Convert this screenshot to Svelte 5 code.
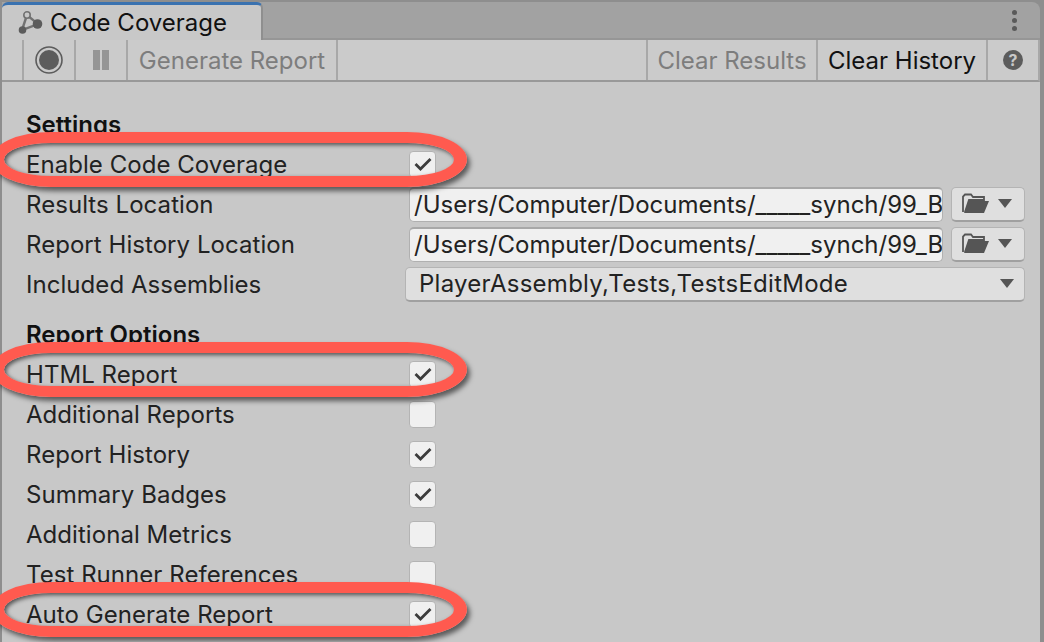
<script>
	const generalRows = [
		{ label: 'Results Location', path: '/Users/Computer/Documents/_____synch/99_B' },
		{ label: 'Report History Location', path: '/Users/Computer/Documents/_____synch/99_B' }
	];
	const reportRows = [
		{ label: 'HTML Report', checked: true },
		{ label: 'Additional Reports', checked: false },
		{ label: 'Report History', checked: true },
		{ label: 'Summary Badges', checked: true },
		{ label: 'Additional Metrics', checked: false },
		{ label: 'Test Runner References', checked: false },
		{ label: 'Auto Generate Report', checked: true }
	];
</script>

{#snippet checkbox(checked)}
	<span class="check">
		{#if checked}
			<svg width="18" height="14" viewBox="0 0 18 14"><path d="M1.500 7 6.500 12 16.500 2" fill="none" stroke="#3c3c3c" stroke-width="2.800" /></svg>
		{/if}
	</span>
{/snippet}

<div class="window">
	<div class="tabbar">
		<div class="tab">
			<svg class="tab-icon" width="26" height="26" viewBox="0 0 26 26">
				<path d="M9 5 4 20 20 14Z" fill="none" stroke="#727272" stroke-width="2.400" />
				<circle cx="9" cy="5" r="3.200" fill="#c8c8c8" stroke="#727272" stroke-width="1.600" />
				<circle cx="4.500" cy="20" r="3.800" fill="#5c5c5c" />
				<circle cx="19.500" cy="14" r="4.800" fill="#5c5c5c" />
			</svg>
			<span>Code Coverage</span>
		</div>
		<div class="kebab"><i></i><i></i><i></i></div>
	</div>

	<div class="toolbar">
		<div class="tool icon first">
			<svg width="30" height="30" viewBox="0 0 30 30">
				<circle cx="15" cy="15" r="13" fill="none" stroke="#5c5c5c" stroke-width="1.600" />
				<circle cx="15" cy="15" r="10" fill="#5c5c5c" />
			</svg>
		</div>
		<div class="tool icon pause"><i></i><i></i></div>
		<div class="tool off gen">Generate Report</div>
		<div class="spacer"></div>
		<div class="tool off results">Clear Results</div>
		<div class="tool history">Clear History</div>
		<div class="tool help"><span>?</span></div>
	</div>

	<div class="content">
		<h3>Settings</h3>
		<div class="row">
			<span class="label">Enable Code Coverage</span>
			{@render checkbox(true)}
		</div>
		{#each generalRows as row}
			<div class="row">
				<span class="label">{row.label}</span>
				<div class="path"><span>{row.path}</span></div>
				<div class="folder">
					<svg width="28" height="22" viewBox="0 0 28 22">
						<path d="M1 19V3.500L3 1.500H9L11 4H22V7H7L3 19" fill="none" stroke="#555" stroke-width="1.800" />
						<path d="M7 8H27L22 20H2Z" fill="#555" />
					</svg>
					<b class="caret"></b>
				</div>
			</div>
		{/each}
		<div class="row">
			<span class="label">Included Assemblies</span>
			<div class="select">
				<span class="assemblies">PlayerAssembly,Tests,TestsEditMode</span>
				<b class="caret"></b>
			</div>
		</div>

		<h3 class="second">Report Options</h3>
		{#each reportRows as row}
			<div class="row">
				<span class="label">{row.label}</span>
				{@render checkbox(row.checked)}
			</div>
		{/each}
	</div>

	<!-- red annotations drawn on top of the screenshot -->
	<div class="oval one"></div>
	<div class="oval two"></div>
	<div class="oval three"></div>
</div>

<style>
	:global(body) {
		margin: 0;
		background: #8e8e8e;
	}
	.window {
		position: relative;
		width: 1044px;
		height: 642px;
		overflow: hidden;
		box-sizing: border-box;
		padding: 2px 4px 0 2px;
		background: #8e8e8e;
		font-family: Inter, 'Liberation Sans', sans-serif;
		font-size: 24px;
		color: #222;
	}
	.tabbar {
		display: flex;
		justify-content: space-between;
		height: 36px;
		background: #a2a2a2;
		border-bottom: 2px solid #969696;
		border-radius: 0 8px 0 0;
	}
	.tab {
		display: flex;
		align-items: center;
		gap: 6px;
		width: 261px;
		height: 38px;
		padding-left: 16px;
		box-sizing: border-box;
		background: #c8c8c8;
		border-top: 3px solid #3a72b0;
		border-right: 2px solid #8f8f8f;
		border-radius: 6px 6px 0 0;
		color: #111;
	}
	.tab-icon { flex: none; }
	.kebab {
		display: flex;
		flex-direction: column;
		justify-content: center;
		gap: 3px;
		padding-right: 23px;
	}
	.kebab i {
		width: 5px;
		height: 5px;
		border-radius: 50%;
		background: #5a5a5a;
	}
	.toolbar {
		display: flex;
		height: 42px;
		box-sizing: border-box;
		padding-left: 20px;
		border-right: 2px solid #a8a8a8;
		border-bottom: 2px solid #999;
		background: #cbcbcb;
	}
	.tool {
		display: flex;
		align-items: center;
		justify-content: center;
		border-right: 2px solid #a8a8a8;
		box-sizing: border-box;
	}
	.first {
		width: 54px;
		border-left: 2px solid #a8a8a8;
	}
	.pause {
		width: 52px;
		gap: 2px;
	}
	.pause i {
		width: 7px;
		height: 20px;
		background: #959595;
	}
	.off { color: #7d7d7d; }
	.gen { width: 210px; }
	.spacer { flex: 1; }
	.results {
		width: 172px;
		border-left: 2px solid #a8a8a8;
	}
	.history {
		width: 170px;
		color: #111;
	}
	.help {
		width: 50px;
		border-right: none;
	}
	.help span {
		width: 20px;
		height: 20px;
		border-radius: 50%;
		background: #5c5c5c;
		color: #c8c8c8;
		font-size: 16px;
		font-weight: 700;
		line-height: 20px;
		text-align: center;
	}
	.content {
		height: 560px;
		padding: 22px 0 0 24px;
		box-sizing: border-box;
		background: #c8c8c8;
	}
	h3 {
		margin: 0;
		height: 40px;
		line-height: 42px;
		font-size: 24px;
		font-weight: 600;
		color: #111;
	}
	.second { margin-top: 10px; }
	.row {
		display: flex;
		align-items: center;
		height: 40px;
	}
	.label {
		width: 383px;
		flex: none;
		white-space: nowrap;
		letter-spacing: 0.05px;
	}
	.check {
		display: flex;
		align-items: center;
		justify-content: center;
		width: 27px;
		height: 27px;
		box-sizing: border-box;
		background: #f0f0f0;
		border: 1px solid #b4b4b4;
		border-radius: 4px;
	}
	.path {
		width: 534px;
		height: 35px;
		padding-left: 4px;
		box-sizing: border-box;
		overflow: hidden;
		white-space: nowrap;
		background: #f0f0f0;
		border: 1px solid #b0b0b0;
		border-top: 2px solid #a8a8a8;
		border-radius: 5px;
		line-height: 32px;
	}
	.folder {
		display: flex;
		align-items: center;
		gap: 8px;
		width: 74px;
		height: 35px;
		margin-left: 8px;
		padding-left: 10px;
		box-sizing: border-box;
		background: #dfdfdf;
		border: 1px solid #b4b4b4;
		border-bottom: 2px solid #a0a0a0;
		border-radius: 5px;
	}
	.select {
		display: flex;
		align-items: center;
		justify-content: space-between;
		width: 620px;
		height: 35px;
		margin-left: -4px;
		padding: 0 10px 0 13px;
		box-sizing: border-box;
		background: #dfdfdf;
		border: 1px solid #b4b4b4;
		border-bottom: 2px solid #a0a0a0;
		border-radius: 5px;
	}
	.assemblies { letter-spacing: 0.26px; }
	.caret {
		width: 0;
		height: 0;
		border-left: 7px solid transparent;
		border-right: 7px solid transparent;
		border-top: 9px solid #555;
	}
	.oval {
		position: absolute;
		left: -9px;
		width: 476px;
		height: 55px;
		box-sizing: border-box;
		border-style: solid;
		border-color: #ff5a4f;
		border-width: 11px 13px;
		border-radius: 60px / 50%;
		box-shadow: 3px 4px 5px rgba(0, 0, 0, 0.55), inset 2px 2px 4px rgba(0, 0, 0, 0.6);
	}
	.one { top: 132px; }
	.two { top: 342px; }
	.three { top: 582px; }
</style>
